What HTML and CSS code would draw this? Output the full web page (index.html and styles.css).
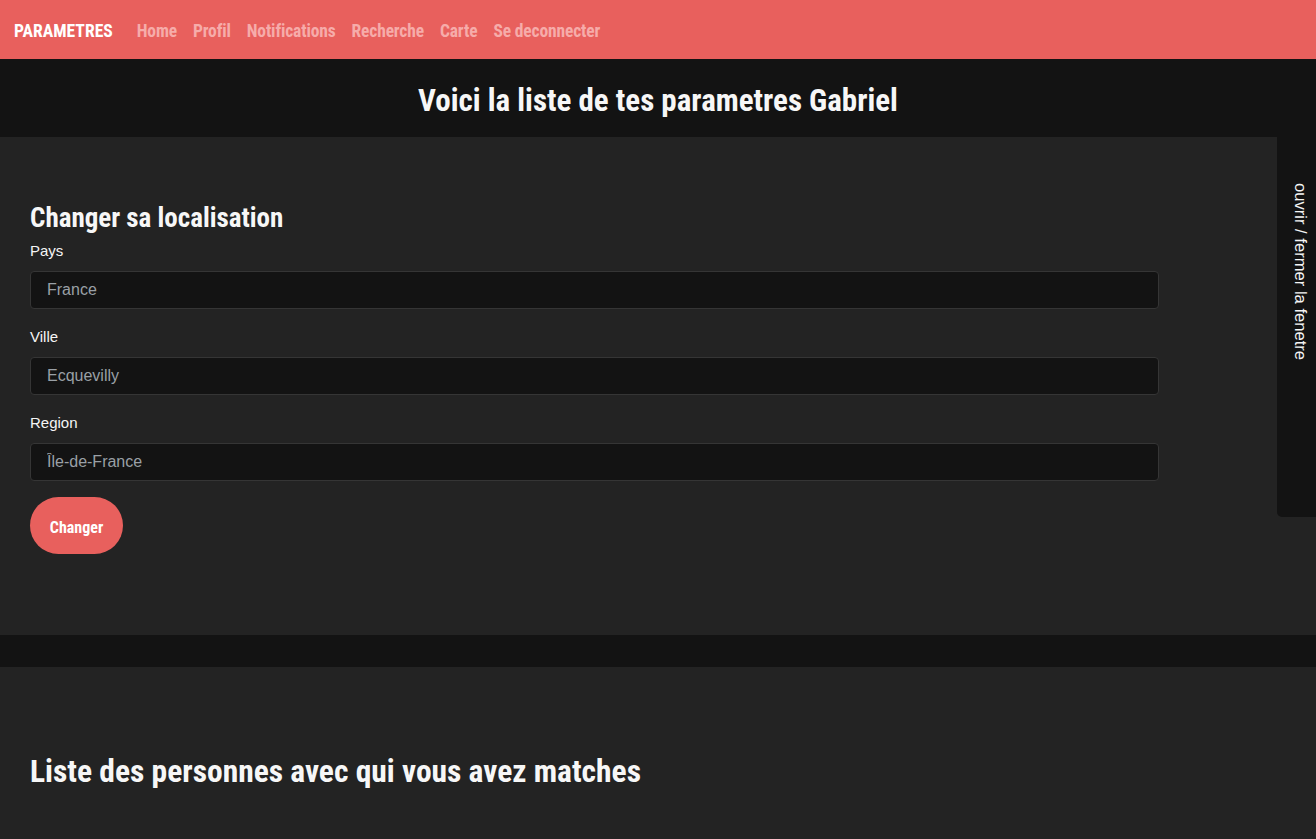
FILE: index.html
```html
<!DOCTYPE html>
<html lang="fr">
<head>
<meta charset="utf-8">
<title>Parametres</title>
<link rel="stylesheet" href="styles.css">
</head>
<body>
<nav class="navbar">
  <a class="brand" href="#">PARAMETRES</a>
  <ul class="nav-links">
    <li><a href="#">Home</a></li>
    <li><a href="#">Profil</a></li>
    <li><a href="#">Notifications</a></li>
    <li><a href="#">Recherche</a></li>
    <li><a href="#">Carte</a></li>
    <li><a href="#">Se deconnecter</a></li>
  </ul>
</nav>
<header class="page-title">
  <h1>Voici la liste de tes parametres Gabriel</h1>
</header>
<section class="panel panel-location">
  <h2 class="panel-heading">Changer sa localisation</h2>
  <form class="loc-form">
    <div class="field">
      <label for="pays">Pays</label>
      <input id="pays" class="input" type="text" placeholder="France">
    </div>
    <div class="field">
      <label for="ville">Ville</label>
      <input id="ville" class="input" type="text" placeholder="Ecquevilly">
    </div>
    <div class="field">
      <label for="region">Region</label>
      <input id="region" class="input" type="text" placeholder="Île-de-France">
    </div>
    <button type="button" class="btn">Changer</button>
  </form>
</section>
<section class="panel panel-matches">
  <h2 class="panel-heading big">Liste des personnes avec qui vous avez matches</h2>
</section>
<aside class="side-toggle">
  <span class="side-text">ouvrir / fermer la fenetre</span>
</aside>
</body>
</html>
```
FILE: styles.css
```css
* { box-sizing: border-box; }
html, body { margin: 0; padding: 0; }
body {
  background: #131313;
  color: #f2f2f2;
  font-family: "Helvetica Neue", "Liberation Sans", Arial, sans-serif;
  font-size: 16px;
  position: relative;
  min-height: 839px;
  overflow: hidden;
}
.brand, .nav-links a, .page-title h1, .panel-heading, .btn {
  font-family: "Roboto", "Open Sans", sans-serif;
  font-stretch: 75%;
}
.navbar {
  height: 59px;
  background: #e8605d;
  display: flex;
  align-items: center;
  padding: 2px 14px 0;
}
.brand {
  color: #fff;
  text-decoration: none;
  font-size: 17.6px;
  font-weight: 700;
  margin-right: 24px;
}
.nav-links {
  list-style: none;
  margin: 0;
  padding: 0;
  display: flex;
  gap: 16px;
}
.nav-links a {
  color: #f6acaa;
  text-decoration: none;
  font-size: 17.5px;
  font-weight: 700;
  letter-spacing: -0.15px;
}
.page-title {
  height: 78px;
  display: flex;
  align-items: center;
  justify-content: center;
  padding-top: 4px;
}
.page-title h1 {
  margin: 0;
  font-size: 31px;
  font-weight: 700;
  color: #f7f7f7;
}
.panel {
  background: #232323;
  padding: 65px 30px 81px;
}
.panel-heading {
  margin: 0 0 6px;
  font-size: 27px;
  line-height: 32px;
  font-weight: 700;
  color: #f7f7f7;
}
.loc-form {
  max-width: 1129px;
  display: flex;
  flex-direction: column;
  align-items: flex-start;
}
.field {
  width: 100%;
  margin-bottom: 17px;
}
.field label {
  display: block;
  font-size: 15px;
  line-height: 22px;
  margin-bottom: 9px;
  color: #f5f5f5;
}
.input {
  display: block;
  width: 100%;
  height: 38px;
  background: #131313;
  border: 1px solid #353535;
  border-radius: 4px;
  padding: 0 16px;
  color: #fff;
  font-family: "Helvetica Neue", "Liberation Sans", Arial, sans-serif;
  font-size: 16px;
}
.input::placeholder { color: #9aa0a6; }
.btn {
  margin-top: -1px;
  width: 93px;
  height: 57px;
  border: none;
  border-radius: 29px;
  background: #e8605d;
  color: #fff;
  font-size: 16px;
  font-weight: 700;
  padding: 3px 0 0;
}
.panel-matches {
  margin-top: 32px;
  padding: 85px 30px 60px;
}
.panel-heading.big {
  font-size: 31.5px;
  line-height: 40px;
}
.side-toggle {
  position: absolute;
  top: 59px;
  right: 0;
  width: 39px;
  height: 458px;
  background: #131313;
  border-bottom-left-radius: 5px;
  display: flex;
  justify-content: center;
  padding: 124px 0 0 6px;
}
.side-text {
  writing-mode: vertical-rl;
  color: #f5f5f5;
  font-size: 16.6px;
}
```
